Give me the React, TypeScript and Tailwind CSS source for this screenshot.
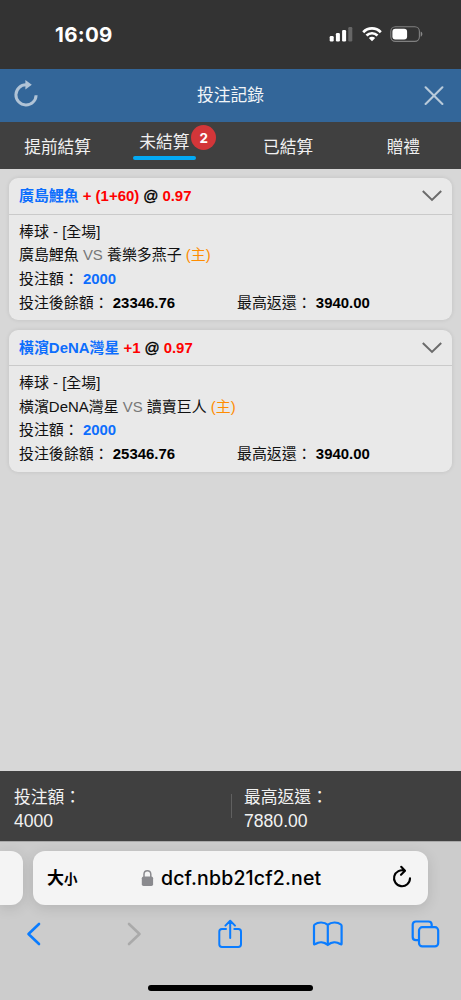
import type { ReactNode } from "react";

type Bet = {
  team: string;
  line: string;
  odds: string;
  home: string;
  away: string;
  stake: string;
  balance: string;
  maxReturn: string;
};

const bets: Bet[] = [
  { team: "廣島鯉魚", line: "+ (1+60)", odds: "0.97", home: "廣島鯉魚", away: "養樂多燕子", stake: "2000", balance: "23346.76", maxReturn: "3940.00" },
  { team: "橫濱DeNA灣星", line: "+1", odds: "0.97", home: "橫濱DeNA灣星", away: "讀賣巨人", stake: "2000", balance: "25346.76", maxReturn: "3940.00" },
];

function StatusBar() {
  return (
    <div className="flex h-[69px] shrink-0 items-start justify-between bg-[#333333] pl-[55px] pr-[38px] text-white">
      <span className="mt-[21px] font-['Inter'] text-[20.5px] leading-[27px] font-bold tracking-[0.3px]">16:09</span>
      <div className="mt-[26px] flex items-center">
        <svg width="24" height="16" viewBox="0 0 24 16" fill="white">
          <rect x="0.7" y="10" width="4" height="5.5" rx="1.2" />
          <rect x="6.9" y="7" width="4" height="8.5" rx="1.2" />
          <rect x="13.1" y="4" width="4" height="11.5" rx="1.2" />
          <rect x="19.3" y="1" width="4" height="14.5" rx="1.2" opacity="0.25" />
        </svg>
        <svg className="ml-[9px]" width="20" height="16" viewBox="0 0 20 16" fill="none" stroke="white" strokeWidth="2.7">
          <path d="M1.2 6.2C6.1 1.2 13.9 1.2 18.8 6.2" />
          <path d="M4.5 9.5C7.6 6.5 12.4 6.5 15.5 9.5" />
          <path d="M10 15.2L6.8 12C8.6 10.4 11.4 10.4 13.2 12Z" fill="white" stroke="none" />
        </svg>
        <svg className="ml-2 -mr-px" width="34" height="16" viewBox="0 0 34 16">
          <rect x="0.8" y="0.8" width="28.6" height="14.6" rx="4.6" fill="none" stroke="white" strokeOpacity="0.38" strokeWidth="1.1" />
          <rect x="2.4" y="2.7" width="14.7" height="10.8" rx="3" fill="white" />
          <path d="M30.7 5.6V10.7C32.9 9.8 32.9 6.5 30.7 5.6Z" fill="white" fillOpacity="0.42" />
        </svg>
      </div>
    </div>
  );
}

function Header() {
  return (
    <header className="grid h-[53px] shrink-0 grid-cols-[60px_1fr_60px] items-center bg-[#336699] text-white">
      <svg className="mt-[-3px] ml-[13px]" width="26" height="30" viewBox="0 0 26 30" fill="none" stroke="#b0c3d6" strokeWidth="3">
        <path d="M13.3 5.8A10.1 10.1 0 1 0 23.1 16.2" />
        <path d="M12.4 1L18.8 5.8L12.4 10.6Z" fill="#b0c3d6" stroke="none" />
      </svg>
      <h1 className="text-center text-[16.8px] leading-6 text-[#f1f5f8]">投注記錄</h1>
      <svg className="ml-[23px]" width="20" height="20" viewBox="0 0 20 20" fill="none" stroke="#b8cada" strokeWidth="2.1" strokeLinecap="round">
        <path d="M1.6 1.3L18.4 18M18.4 1.3L1.6 18" />
      </svg>
    </header>
  );
}

function Tab({ children }: { children: ReactNode }) {
  return <button className="flex items-center justify-center pt-[4px]">{children}</button>;
}

function Tabs() {
  return (
    <nav className="grid h-[47px] shrink-0 grid-cols-4 bg-[#404040] text-[16.7px] leading-6 text-[#f0f0f0]">
      <Tab>提前結算</Tab>
      <button className="flex flex-col items-center pr-[17px] pt-[9px]">
        <span className="relative">
          未結算
          <span className="absolute top-[-6px] left-[52px] flex h-[25px] w-[25px] items-center justify-center rounded-full bg-[#d33639] font-['Inter'] text-[13.5px] font-bold text-white">
            2
          </span>
        </span>
        <span className="mt-[1px] h-[4px] w-[63px] rounded-full bg-[#03a9f4]" />
      </button>
      <Tab>已結算</Tab>
      <Tab>贈禮</Tab>
    </nav>
  );
}

function BetCard({ bet }: { bet: Bet }) {
  return (
    <article className="h-[142px] rounded-[9px] bg-[#e9e9e9] text-[14.95px] text-[#111111] shadow-[0_0_4px_rgba(0,0,0,0.1)]">
      <div className="flex h-[36.5px] items-center justify-between border-b border-[#cacaca] pl-[10px] pr-[9px]">
        <div className="flex gap-1 pt-px whitespace-pre font-bold">
          <span className="text-[#0d6efd]">{bet.team}</span>
          <span className="text-[#ff0000]">{bet.line}</span>
          <span className="font-normal text-black [-webkit-text-stroke:0.4px_black]">@</span>
          <span className="text-[#ff0000]">{bet.odds}</span>
        </div>
        <svg className="mt-px mr-px" width="20" height="12" viewBox="0 0 20 12" fill="none" stroke="#6b6b6b" strokeWidth="2">
          <path d="M0.8 1L10 9.9L19.2 1" />
        </svg>
      </div>
      <div className="px-[10px] pt-[5.3px] leading-[23.6px]">
        <p>棒球 - [全場]</p>
        <p>
          {bet.home} <span className="text-[#777777]">VS</span> {bet.away} <span className="text-[#ff8c00]">(主)</span>
        </p>
        <p>
          投注額： <b className="text-[#0d6efd]">{bet.stake}</b>
        </p>
        <div className="grid grid-cols-[218px_1fr]">
          <p>
            投注後餘額： <b className="text-black">{bet.balance}</b>
          </p>
          <p>
            最高返還： <b className="text-black">{bet.maxReturn}</b>
          </p>
        </div>
      </div>
    </article>
  );
}

function Summary() {
  return (
    <section className="flex h-[70px] shrink-0 items-start bg-[#404040] pl-[14px] pt-[15px] text-[16.8px] text-[#f2f2f2]">
      <div className="w-[217px]">
        <p className="leading-6">投注額：</p>
        <p className="text-[17.6px] leading-[22px]">4000</p>
      </div>
      <div className="mt-[8px] mr-[12px] h-[24px] w-px bg-[#606060]" />
      <div>
        <p className="leading-6">最高返還：</p>
        <p className="text-[17.6px] leading-[22px]">7880.00</p>
      </div>
    </section>
  );
}

function BrowserBar() {
  return (
    <footer className="flex h-[159px] shrink-0 flex-col overflow-hidden border-t border-[#a9a9a9] bg-[#cccccc]">
      <div className="mt-[9px] flex h-[54px] gap-[10px]">
        <div className="w-[23px] rounded-r-[12px] bg-[#f4f4f4] shadow-[0_3px_14px_rgba(0,0,0,0.12)]" />
        <div className="flex w-[395px] items-center rounded-[12px] bg-[#f4f4f4] pl-[14px] pr-[16px] text-black shadow-[0_3px_14px_rgba(0,0,0,0.12)]">
          <span className="flex w-[94px] items-baseline pt-[2px] font-bold">
            <span className="text-[17px]">大</span>
            <span className="text-[13.5px]">小</span>
          </span>
          <svg width="13" height="18" viewBox="0 0 13 18">
            <path d="M3 8V5.3C3 3 4.4 1.7 6.4 1.7S9.8 3 9.8 5.3V8" fill="none" stroke="#8a8a8e" strokeWidth="1.5" />
            <rect x="0.8" y="7.6" width="11.3" height="9.3" rx="1.7" fill="#8a8a8e" />
          </svg>
          <span className="ml-[7px] pt-[2px] font-['Inter'] text-[19.5px] font-medium tracking-[0.15px] whitespace-nowrap">dcf.nbb21cf2.net</span>
          <svg className="mt-[-3px] ml-auto" width="20" height="24" viewBox="0 0 20 24" fill="none" stroke="black" strokeWidth="2.1" strokeLinecap="round" strokeLinejoin="round">
            <path d="M13 5.8A8 8 0 1 0 18 13.2M9.2 1.8L13 5.8L9 9.8" />
          </svg>
        </div>
      </div>
      <nav className="mt-[11px] mb-px grid h-[36px] grid-cols-[68px_132px_61px_134px_61px] items-center text-[#0a7cff]">
        <svg className="ml-[26px]" width="16" height="24" viewBox="0 0 16 24" fill="none" stroke="currentColor" strokeWidth="2.6" strokeLinecap="round" strokeLinejoin="round">
          <path d="M13 2L2.5 12L13 22" />
        </svg>
        <svg className="ml-[58px]" width="16" height="24" viewBox="0 0 16 24" fill="none" stroke="#aaaaaa" strokeWidth="2.6" strokeLinecap="round" strokeLinejoin="round">
          <path d="M3 2L13.5 12L3 22" />
        </svg>
        <svg className="ml-[17px]" width="26" height="32" viewBox="0 0 26 32" fill="none" stroke="currentColor" strokeWidth="2" strokeLinecap="round" strokeLinejoin="round">
          <path d="M9 11H5C3.3 11 2.3 12 2.3 13.7V26.3C2.3 28 3.3 29 5 29H21.3C23 29 24 28 24 26.3V13.7C24 12 23 11 21.3 11H17.3M13.2 20V2.8M8.4 7.6L13.2 2.8L18 7.6" />
        </svg>
        <svg className="ml-[51px]" width="32" height="26" viewBox="0 0 32 26" fill="none" stroke="currentColor" strokeWidth="2.2" strokeLinejoin="round">
          <path d="M15.8 3.9C12.3 0.7 6 0.8 2.7 3.5C2.2 3.9 2 4.3 2 5V22.4C2 23.7 2.5 23.7 3.4 23C7 20.6 12.1 20.8 15.8 24C19.5 20.8 24.6 20.6 28.2 23C29.1 23.7 29.6 23.7 29.6 22.4V5C29.6 4.3 29.4 3.9 28.9 3.5C25.6 0.8 19.3 0.7 15.8 3.9V24" />
        </svg>
        <svg className="ml-[16px]" width="29" height="28" viewBox="0 0 29 28" fill="none" stroke="currentColor" strokeWidth="2.2" strokeLinejoin="round">
          <rect x="8" y="7.2" width="19.2" height="19.2" rx="3.3" />
          <path d="M7.3 20.2H5C3 20.2 1.7 19 1.7 17V4.7C1.7 2.7 3 1.5 5 1.5H17.4C19.4 1.5 20.7 2.7 20.7 4.7V6.8" />
        </svg>
      </nav>
      <div className="mx-auto mt-[32px] h-[6px] w-[165px] rounded-full bg-black" />
    </footer>
  );
}

export default function App() {
  return (
    <div className="flex h-[1000px] w-[461px] flex-col overflow-hidden bg-[#d7d7d7] font-['Liberation_Sans','Noto_Sans_CJK_TC',sans-serif]">
      <StatusBar />
      <Header />
      <Tabs />
      <main className="flex flex-1 flex-col gap-[9.5px] pt-[9px] pr-[9.5px] pl-[9px]">
        {bets.map((bet) => (
          <BetCard key={bet.team} bet={bet} />
        ))}
      </main>
      <Summary />
      <BrowserBar />
    </div>
  );
}
